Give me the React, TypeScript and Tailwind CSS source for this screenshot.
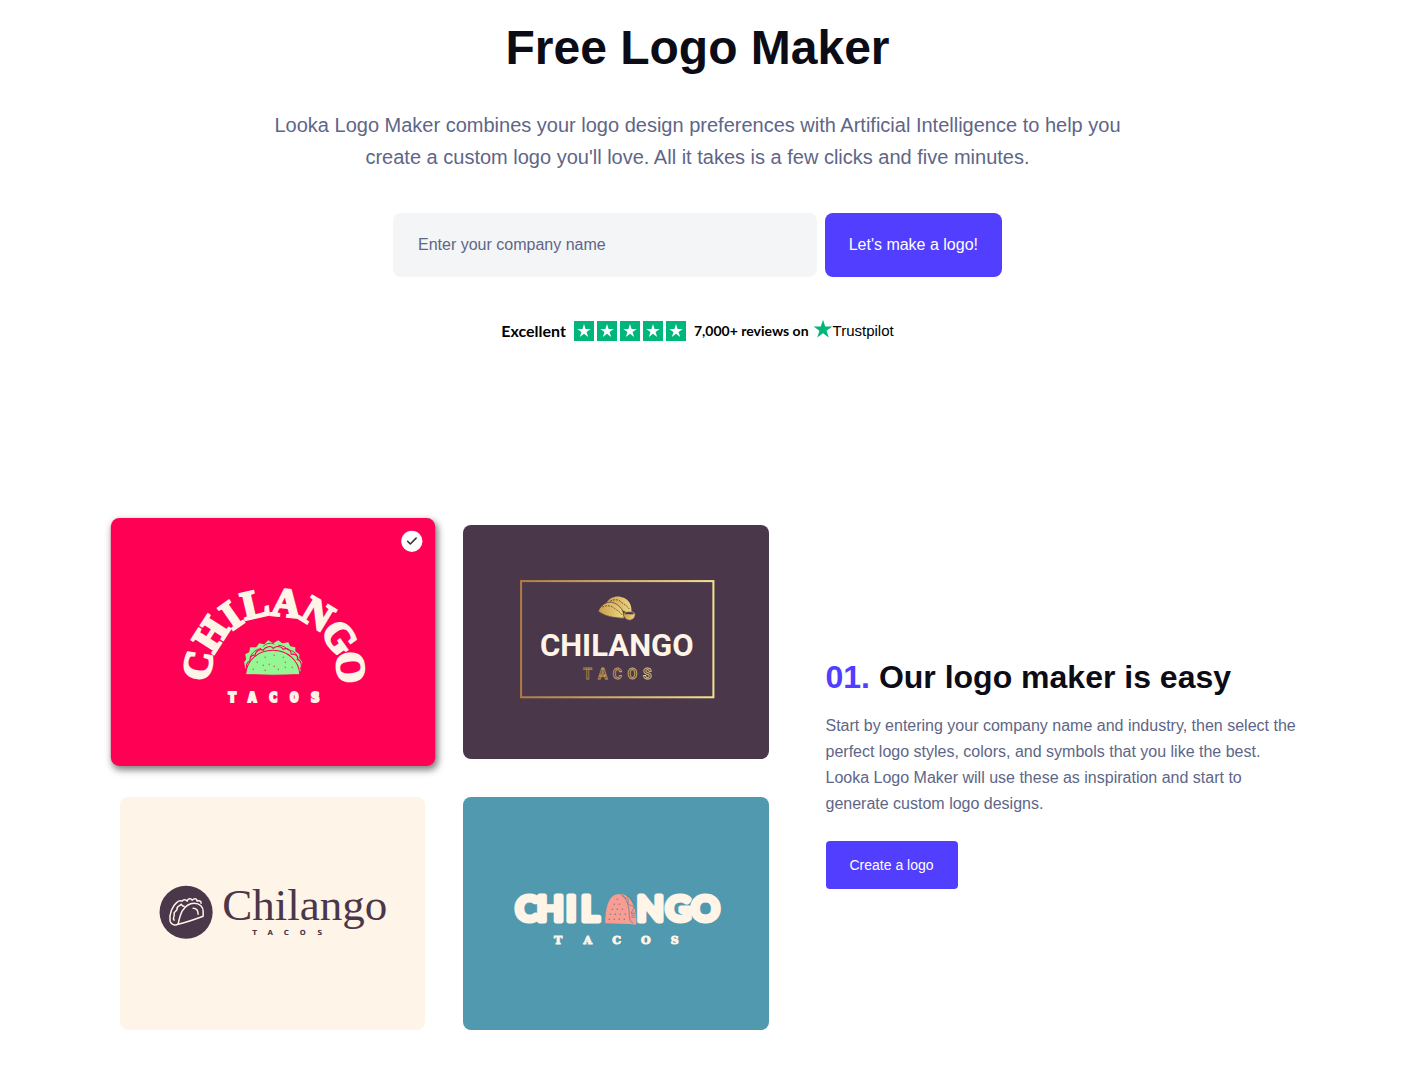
import { Check } from "lucide-react";

const arcLetters = [
  { char: "C", x: 87, y: 147, angle: -80 },
  { char: "H", x: 100, y: 116, angle: -57 },
  { char: "I", x: 120, y: 97, angle: -35 },
  { char: "L", x: 144, y: 86, angle: -13 },
  { char: "A", x: 175, y: 85, angle: 6 },
  { char: "N", x: 206, y: 96, angle: 31 },
  { char: "G", x: 228, y: 119, angle: 54 },
  { char: "O", x: 239, y: 149, angle: 84 },
];

const starPath = "M10 1.6 12 7.7h6.4l-5.2 3.8 2 6.1L10 13.8l-5.2 3.8 2-6.1L1.6 7.7H8z";

function RatingStar() {
  return (
    <svg viewBox="0 0 20 20" className="size-5 bg-[#00b67a]" aria-hidden="true">
      <path d={starPath} fill="#fff" transform="translate(2 1.8) scale(.8)" />
    </svg>
  );
}

function ArchLogo() {
  return (
    <svg viewBox="0 0 323 247" className="block w-full" role="img" aria-label="Chilango Tacos">
      <g fill="#fff4e8" stroke="#fff4e8" strokeWidth="2.5" fontSize="40" textAnchor="middle" className="font-['Liberation_Serif',serif] font-bold">
        {arcLetters.map((letter) => (
          <text key={letter.char} y="13" transform={`translate(${letter.x} ${letter.y}) rotate(${letter.angle})`}>
            {letter.char}
          </text>
        ))}
      </g>
      <path
        d="M134 150l-1-6 2-3-1-5 4-2 1-5 6 0 3-4 5 1 4-4 5 3 5-3 4 3 6-1 2 4 5 1 0 4 4 3 0 4 3 4-1 5-1 4z"
        fill="#93f793"
      />
      <path
        d="M136 151c-2-4 0-8 3-8-1-4 2-7 5-6 0-4 5-7 8-5 2-4 8-5 10-2 3-3 8-2 10 1 4-2 8 1 8 5 4-1 7 2 6 5 4 1 5 6 3 10"
        fill="none"
        stroke="#ff0055"
        strokeWidth="1.1"
      />
      <path d="M134.500 156c1-14 12-24 27-24s26 10 27 24c-18 1-36 1-54 0z" fill="#93f793" stroke="#ff0055" />
      <path
        d="M139 139c2-5 6-8 11-9M152 128c3-3 8-4 11-2M167 127c4 0 8 2 10 5M179 132c4 1 7 4 8 8"
        fill="none"
        stroke="#ff0055"
        strokeWidth=".9"
      />
      <g fill="#d06a4e">
        <circle cx="146" cy="144" r=".8" />
        <circle cx="154" cy="139" r=".8" />
        <circle cx="163" cy="137" r=".8" />
        <circle cx="172" cy="139" r=".8" />
        <circle cx="152" cy="147" r=".8" />
        <circle cx="158" cy="146" r=".8" />
        <circle cx="163" cy="148" r=".8" />
        <circle cx="174" cy="144" r=".8" />
        <circle cx="142" cy="151" r=".8" />
        <circle cx="154" cy="152" r=".8" />
        <circle cx="167" cy="151" r=".8" />
        <circle cx="174" cy="149" r=".8" />
        <circle cx="181" cy="149" r=".8" />
      </g>
      <text x="121 141 162 183 204" y="184" fill="#fff4e8" stroke="#fff4e8" strokeWidth="2" fontSize="14" textAnchor="middle" className="font-['DejaVu_Sans_Mono',monospace] font-bold">
        TACOS
      </text>
    </svg>
  );
}

function FrameLogo() {
  return (
    <svg viewBox="0 0 305 233" className="block w-full" role="img" aria-label="Chilango Tacos">
      <defs>
        <linearGradient id="gold">
          <stop offset="0" stopColor="#b17c42" />
          <stop offset="1" stopColor="#f3e38f" />
        </linearGradient>
        <linearGradient id="gold-shell">
          <stop offset="0" stopColor="#c99d4c" />
          <stop offset="1" stopColor="#eed67f" />
        </linearGradient>
        <linearGradient id="gold-type" gradientUnits="userSpaceOnUse" x1="120" y1="0" x2="188" y2="0">
          <stop offset="0" stopColor="#b17c42" />
          <stop offset="1" stopColor="#e6d283" />
        </linearGradient>
      </defs>
      <rect x="58" y="56" width="192" height="116" fill="none" stroke="url(#gold)" strokeWidth="2" />
      <path d="M143 78c4-7 12-8 18-5 6 3 8 9 7 16z" fill="url(#gold-shell)" />
      <path d="M135 86c4-9 12-11 18-7 5 3 8 8 8 14-10 0-20-2-26-7z" fill="url(#gold-shell)" stroke="#4a374a" strokeWidth=".7" />
      <path d="M139 82c4-2 8-2 12 1s6 4 8 7M147 76c4-2 8-2 11 1s6 3 8 7" fill="none" stroke="#5c4138" strokeWidth=".8" strokeDasharray="2 1" />
      <path d="M160 88h12c0 5-3 7-6 7s-6-3-6-7z" fill="url(#gold-shell)" stroke="#4a374a" strokeWidth=".6" />
      <ellipse cx="166" cy="88" rx="5" ry="1.5" fill="#4a374a" stroke="#cfae65" strokeWidth=".7" />
      <text x="153.5" y="131" fill="#fff4e8" fontSize="31" textAnchor="middle" className="font-['Roboto',sans-serif] font-bold">
        CHILANGO
      </text>
      <text x="124.5 139.5 154 169 184" y="154" fill="none" stroke="url(#gold-type)" strokeWidth=".8" fontSize="14" textAnchor="middle" className="font-['Roboto',sans-serif] font-bold">
        TACOS
      </text>
    </svg>
  );
}

function SerifLogo() {
  return (
    <svg viewBox="0 0 305 233" className="block w-full" role="img" aria-label="Chilango Tacos">
      <circle cx="66" cy="115" r="26.5" fill="#4a374a" />
      <g fill="none" stroke="#fff4e8" strokeWidth="1.5" strokeLinecap="round" strokeLinejoin="round">
        <path d="M58 127c1-5 2-9 4-13 3-5 7-8 12-8 6 0 9 4 9 8v5c-8 3-16 6-25 8z" />
        <path d="M58 127c-3 2-7 0-8-3-1-7 2-15 7-19 1-1 3-2 5-1 1-2 4-2 5 0 1-3 4-3 5-1 2-2 5-2 5 1 2-1 4 0 4 2" />
        <path d="M54 123c-2-3 1-4 0-6-1-3 3-3 3-5-1-3 3-3 4-5 1 1 1 2 3 2M73 111c3 0 5 2 5 6" />
      </g>
      <text x="102" y="123" fill="#4a374a" fontSize="45" className="font-['Liberation_Serif',serif]">
        Chilango
      </text>
      <text x="134.5 150 166 182.5 199.5" y="138" fill="#4a374a" fontSize="7" textAnchor="middle" className="font-['DejaVu_Sans',sans-serif] font-bold">
        TACOS
      </text>
    </svg>
  );
}

function BubbleLogo() {
  return (
    <svg viewBox="0 0 305 233" className="block w-full" role="img" aria-label="Chilango Tacos">
      <g fill="#fff4e8" stroke="#fff4e8" strokeWidth="5" strokeLinejoin="round" fontSize="35" textAnchor="middle" className="font-['Lato',sans-serif] font-bold">
        <text x="64 87 108 127" y="124">CHIL</text>
        <text x="187 215 242" y="124">NGO</text>
      </g>
      <path d="M142 126c0-14 3-29 13-29 11 0 18 9 18 30z" fill="#f99c92" />
      <path d="M155 97c13-1 17 12 18 29 0 2-2 1-4 1-4 0-4-4-3-8-1-10-3-18-11-22z" fill="#f99c92" />
      <path
        d="M157 97c7 4 9 13 9 21 0 4 1 7 4 8M160 98c1 4 5 2 5 5s-1 4 2 5 4 1 3 4-3 3-1 5M163 98c2 3 4 1 5 4s2 3 3 6M168 116h4M168 118h4M168 120h4"
        fill="none"
        stroke="#547f98"
        strokeWidth=".7"
      />
      <g stroke="#547f98" strokeWidth="1.4" strokeLinecap="round" strokeDasharray="0 5">
        <path d="M154 102h1M151 107h6M149 112h12M147 117h16M146 122h16" />
      </g>
      <text x="95 124.5 153.5 182.5 211.5" y="147" fill="#fff4e8" stroke="#fff4e8" strokeWidth="1" fontSize="11" textAnchor="middle" className="font-['DejaVu_Serif',serif] font-bold">
        TACOS
      </text>
    </svg>
  );
}

export default function App() {
  return (
    <main className="min-h-screen bg-white pr-[19px] pb-10 font-['Liberation_Sans',Arial,sans-serif] text-[#0c0c16]">
      <section className="flex flex-col items-center px-6 pt-6 text-center">
        <h1 className="text-5xl leading-12 font-bold">Free Logo Maker</h1>
        <p className="mt-[37px] max-w-[860px] text-xl leading-8 text-[#5e6687]">
          Looka Logo Maker combines your logo design preferences with Artificial Intelligence to help you create a
          custom logo you'll love. All it takes is a few clicks and five minutes.
        </p>
        <form className="mt-10 flex w-full max-w-[609px] gap-2" onSubmit={(e) => e.preventDefault()}>
          <input
            type="text"
            aria-label="Company name"
            placeholder="Enter your company name"
            className="h-16 min-w-0 flex-1 rounded-lg bg-[#f4f5f7] px-[25px] text-base text-[#0c0c16] placeholder:text-[#5e6687]"
          />
          <button type="submit" className="h-16 rounded-lg bg-[#513eff] px-6 text-base text-white">
            Let's make a logo!
          </button>
        </form>
        <div className="mt-11 flex h-5 items-center font-['Lato',sans-serif] font-bold text-black">
          <span className="text-base">Excellent</span>
          <span className="mx-2 flex gap-[3px]">
            <RatingStar />
            <RatingStar />
            <RatingStar />
            <RatingStar />
            <RatingStar />
          </span>
          <span className="text-sm">7,000+ reviews on</span>
          <a href="#trustpilot" className="ml-1 flex items-center font-['Liberation_Sans',sans-serif] text-[15px] font-normal">
            <svg viewBox="1 1 18 18" className="mb-1 size-5" aria-hidden="true">
              <path d={starPath} fill="#00b67a" />
            </svg>
            Trustpilot
          </a>
        </div>
      </section>

      <section className="mx-auto mt-46 flex max-w-[1208px] items-center gap-[57px]">
        <div className="grid w-[675px] shrink-0 grid-cols-2 gap-x-[38px] gap-y-[38px] pl-[26px]">
          <div className="relative z-10 scale-106 rounded-lg bg-[#ff0055] shadow-[2px_3px_7px_rgba(0,0,0,0.5)]">
            <ArchLogo />
            <span className="absolute top-3 right-3 flex size-5 items-center justify-center rounded-full bg-white">
              <Check className="size-3 text-[#333]" strokeWidth={3} />
            </span>
          </div>
          <div className="rounded-lg bg-[#4a374a]">
            <FrameLogo />
          </div>
          <div className="rounded-lg bg-[#fff4e8]">
            <SerifLogo />
          </div>
          <div className="rounded-lg bg-[#5199ae]">
            <BubbleLogo />
          </div>
        </div>
        <div className="flex-1 pb-1">
          <h2 className="text-[32px] leading-8 font-bold">
            <span className="text-[#513eff]">01.</span> Our logo maker is easy
          </h2>
          <p className="mt-5 text-base leading-[26px] text-[#5e6687]">
            Start by entering your company name and industry, then select the perfect logo styles, colors, and symbols
            that you like the best. Looka Logo Maker will use these as inspiration and start to generate custom logo
            designs.
          </p>
          <a href="#create" className="mt-6 inline-flex h-12 items-center rounded bg-[#513eff] px-6 text-sm text-white">
            Create a logo
          </a>
        </div>
      </section>
    </main>
  );
}
